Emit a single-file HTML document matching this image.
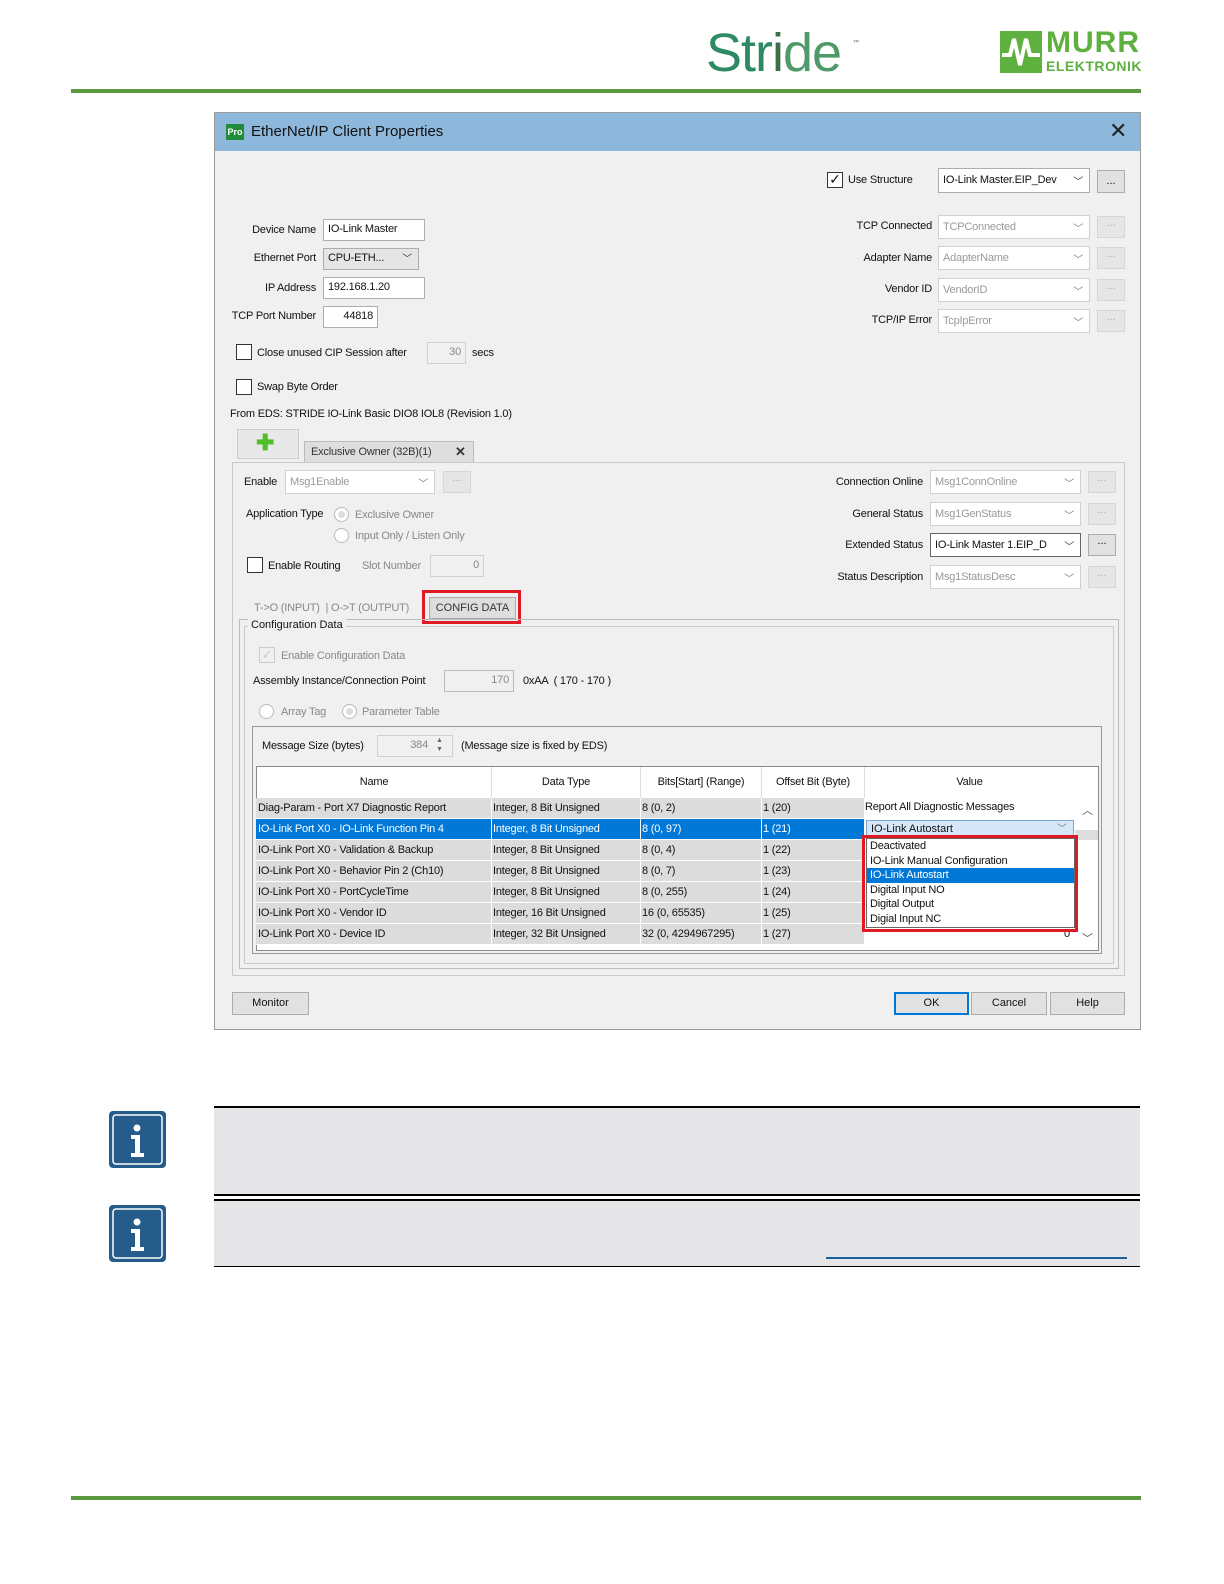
<!DOCTYPE html>
<html><head><meta charset="utf-8"><style>
*{margin:0;padding:0;box-sizing:border-box}
body{width:1224px;height:1584px;background:#fff;position:relative;font-family:"Liberation Sans",sans-serif;font-size:11px;color:#111;overflow:hidden}
.a{position:absolute;white-space:nowrap}
.inp{position:absolute;background:#fff;border:1px solid #adadad;padding:2px 4px;font-size:11px;line-height:15px;letter-spacing:-0.2px}
.dis{color:#999;border-color:#d0d0d0}
.btn{position:absolute;background:#e1e1e1;border:1px solid #adadad;text-align:center;font-size:11px}
.bd{background:#e6e6e6;border-color:#d6d6d6;color:#aaa}
.chk{position:absolute;width:16px;height:16px;border:1px solid #333;background:#fff}
.rad{position:absolute;width:15px;height:15px;border:1px solid #bbb;border-radius:50%;background:#fff}
.lbl{position:absolute;white-space:nowrap;font-size:11px;text-align:right;letter-spacing:-0.2px}
.cv{position:absolute;right:6px;top:2px;color:#777;font-size:10px}
.row{position:absolute;left:256px;width:608px;height:21px;background:#dcdcdc;border-bottom:1px solid #fff;font-size:11px;line-height:20px;letter-spacing:-0.2px}
.row span{position:absolute;top:0}
.dd div{height:14.5px;line-height:14px;padding-left:3px;font-size:11px;letter-spacing:-0.2px}
</style></head><body>

<!-- header -->
<div class="a" style="left:706px;top:22px;font-size:54px;color:#2e8a62;letter-spacing:-1px;font-family:'Liberation Sans',sans-serif">Str<span style="color:#3f6f4a">i</span><span style="color:#4f9a68">de</span></div>
<div class="a" style="left:853px;top:40px;font-size:6px;color:#555">™</div>
<svg class="a" style="left:1000px;top:31px" width="42" height="42" viewBox="0 0 42 42"><rect width="42" height="42" fill="#5fb13f"/><path d="M2 24 L10 24 L14 8 L20 34 L26 8 L30 24 L40 24" stroke="#fff" stroke-width="4" fill="none"/></svg>
<div class="a" style="left:1046px;top:26px;font-size:30px;font-weight:bold;color:#5fb13f;letter-spacing:1px">MURR</div>
<div class="a" style="left:1046px;top:58px;font-size:14px;font-weight:bold;color:#5fb13f;letter-spacing:0.5px">ELEKTRONIK</div>
<div class="a" style="left:71px;top:89px;width:1070px;height:4px;background:#5a9a3e"></div>

<!-- dialog -->
<div class="a" style="left:214px;top:112px;width:927px;height:918px;background:#f0f0f0;border:1px solid #9a9a9a"></div>
<div class="a" style="left:215px;top:113px;width:925px;height:38px;background:#8db8dc"></div>
<div class="a" style="left:226px;top:124px;width:18px;height:16px;background:#1e8c3a;color:#fff;font-size:9px;font-weight:bold;line-height:16px;text-align:center">Pro</div>
<div class="a" style="left:251px;top:123px;font-size:15px;color:#111">EtherNet/IP Client Properties</div>
<div class="a" style="left:1109px;top:118px;font-size:22px;color:#222">✕</div>

<!-- top left -->
<div class="lbl" style="left:230px;width:86px;top:224px">Device Name</div>
<div class="inp" style="left:323px;top:219px;width:102px;height:22px">IO-Link Master</div>
<div class="lbl" style="left:230px;width:86px;top:252px">Ethernet Port</div>
<div class="inp" style="left:323px;top:248px;width:96px;height:22px;background:#e5e5e5">CPU-ETH...<span class="cv" style="top:3px;color:#333">﹀</span></div>
<div class="lbl" style="left:230px;width:86px;top:282px">IP Address</div>
<div class="inp" style="left:323px;top:277px;width:102px;height:22px">192.168.1.20</div>
<div class="lbl" style="left:228px;width:88px;top:310px">TCP Port Number</div>
<div class="inp" style="left:323px;top:306px;width:55px;height:22px;text-align:right">44818</div>
<div class="chk" style="left:236px;top:344px"></div>
<div class="lbl" style="left:257px;top:347px">Close unused CIP Session after</div>
<div class="inp dis" style="left:427px;top:342px;width:39px;height:22px;text-align:right;background:#f0f0f0;color:#888">30</div>
<div class="lbl" style="left:472px;top:347px">secs</div>
<div class="chk" style="left:236px;top:379px"></div>
<div class="lbl" style="left:257px;top:381px">Swap Byte Order</div>
<div class="lbl" style="left:230px;top:408px">From EDS: STRIDE IO-Link Basic DIO8 IOL8 (Revision 1.0)</div>

<!-- top right -->
<div class="chk" style="left:827px;top:172px;font-size:14px;line-height:13px;text-align:center">✓</div>
<div class="lbl" style="left:848px;top:174px">Use Structure</div>
<div class="inp" style="left:938px;top:168px;width:152px;height:25px;line-height:18px">IO-Link Master.EIP_Dev<span class="cv" style="top:5px;color:#333">﹀</span></div>
<div class="btn" style="left:1097px;top:170px;width:28px;height:23px;line-height:20px">...</div>
<div class="lbl" style="left:820px;width:112px;top:220px">TCP Connected</div>
<div class="inp dis" style="left:938px;top:215px;width:152px;height:24px;line-height:18px">TCPConnected<span class="cv" style="top:5px">﹀</span></div>
<div class="btn bd" style="left:1097px;top:216px;width:28px;height:22px">...</div>
<div class="lbl" style="left:820px;width:112px;top:252px">Adapter Name</div>
<div class="inp dis" style="left:938px;top:246px;width:152px;height:24px;line-height:18px">AdapterName<span class="cv" style="top:5px">﹀</span></div>
<div class="btn bd" style="left:1097px;top:247px;width:28px;height:22px">...</div>
<div class="lbl" style="left:820px;width:112px;top:283px">Vendor ID</div>
<div class="inp dis" style="left:938px;top:278px;width:152px;height:24px;line-height:18px">VendorID<span class="cv" style="top:5px">﹀</span></div>
<div class="btn bd" style="left:1097px;top:279px;width:28px;height:22px">...</div>
<div class="lbl" style="left:820px;width:112px;top:314px">TCP/IP Error</div>
<div class="inp dis" style="left:938px;top:309px;width:152px;height:24px;line-height:18px">TcpIpError<span class="cv" style="top:5px">﹀</span></div>
<div class="btn bd" style="left:1097px;top:310px;width:28px;height:22px">...</div>

<!-- connection tabs -->
<div class="btn" style="left:237px;top:429px;width:62px;height:30px;background:#e8e8e8;border-color:#ccc"></div>
<div class="a" style="left:256px;top:433px;font-size:22px;font-weight:bold;color:#4fc02a;line-height:20px">✚</div>
<div class="a" style="left:304px;top:441px;width:170px;height:21px;background:#dedede;border:1px solid #bbb;border-bottom:none;font-size:11px;line-height:20px;padding-left:6px;color:#333;letter-spacing:-0.2px">Exclusive Owner (32B)(1)<span style="position:absolute;left:150px;font-weight:bold;font-size:13px">✕</span></div>
<div class="a" style="left:232px;top:462px;width:893px;height:514px;border:1px solid #c8c8c8"></div>

<div class="lbl" style="left:244px;top:476px">Enable</div>
<div class="inp dis" style="left:285px;top:470px;width:150px;height:24px;line-height:18px">Msg1Enable<span class="cv" style="top:5px">﹀</span></div>
<div class="btn bd" style="left:443px;top:471px;width:28px;height:22px">...</div>
<div class="lbl" style="left:246px;top:508px">Application Type</div>
<div class="rad" style="left:334px;top:507px;background:#ddd;box-shadow:inset 0 0 0 3px #fff"></div>
<div class="lbl" style="left:355px;top:509px;color:#888">Exclusive Owner</div>
<div class="rad" style="left:334px;top:528px"></div>
<div class="lbl" style="left:355px;top:530px;color:#888">Input Only / Listen Only</div>
<div class="chk" style="left:247px;top:557px"></div>
<div class="lbl" style="left:268px;top:560px">Enable Routing</div>
<div class="lbl" style="left:362px;top:560px;color:#888">Slot Number</div>
<div class="inp dis" style="left:430px;top:555px;width:54px;height:22px;text-align:right;background:#f0f0f0;color:#888">0</div>

<div class="lbl" style="left:810px;width:113px;top:476px">Connection Online</div>
<div class="inp dis" style="left:930px;top:470px;width:151px;height:24px;line-height:18px">Msg1ConnOnline<span class="cv" style="top:5px">﹀</span></div>
<div class="btn bd" style="left:1088px;top:471px;width:28px;height:22px">...</div>
<div class="lbl" style="left:810px;width:113px;top:508px">General Status</div>
<div class="inp dis" style="left:930px;top:502px;width:151px;height:24px;line-height:18px">Msg1GenStatus<span class="cv" style="top:5px">﹀</span></div>
<div class="btn bd" style="left:1088px;top:503px;width:28px;height:22px">...</div>
<div class="lbl" style="left:810px;width:113px;top:539px">Extended Status</div>
<div class="inp" style="left:930px;top:533px;width:151px;height:24px;line-height:18px;border-color:#666">IO-Link Master 1.EIP_D<span class="cv" style="top:5px;color:#333">﹀</span></div>
<div class="btn" style="left:1088px;top:534px;width:28px;height:22px">...</div>
<div class="lbl" style="left:810px;width:113px;top:571px">Status Description</div>
<div class="inp dis" style="left:930px;top:565px;width:151px;height:24px;line-height:18px">Msg1StatusDesc<span class="cv" style="top:5px">﹀</span></div>
<div class="btn bd" style="left:1088px;top:566px;width:28px;height:22px">...</div>

<!-- sub tabs -->
<div class="lbl" style="left:254px;top:602px;color:#888">T-&gt;O (INPUT) &nbsp;| O-&gt;T (OUTPUT)</div>
<div class="a" style="left:429px;top:597px;width:87px;height:22px;background:#dedede;border:1px solid #aaa;font-size:11px;line-height:20px;text-align:center;color:#333">CONFIG DATA</div>
<div class="a" style="left:422px;top:590px;width:99px;height:34px;border:3px solid #e01a22"></div>
<div class="a" style="left:239px;top:619px;width:880px;height:350px;border:1px solid #bbb"></div>
<div class="a" style="left:244px;top:626px;width:870px;height:338px;border:1px solid #ccc"></div>
<div class="a" style="left:248px;top:619px;background:#f0f0f0;padding:0 3px;font-size:11px">Configuration Data</div>

<div class="chk" style="left:259px;top:647px;border-color:#ccc;color:#ccc;font-size:13px;line-height:13px;text-align:center;background:#f0f0f0">✓</div>
<div class="lbl" style="left:281px;top:650px;color:#888">Enable Configuration Data</div>
<div class="lbl" style="left:253px;top:675px">Assembly Instance/Connection Point</div>
<div class="inp dis" style="left:444px;top:670px;width:70px;height:22px;text-align:right;background:#f0f0f0;color:#888;border-color:#bbb">170</div>
<div class="lbl" style="left:523px;top:675px">0xAA &nbsp;( 170 - 170 )</div>
<div class="rad" style="left:259px;top:704px"></div>
<div class="lbl" style="left:281px;top:706px;color:#888">Array Tag</div>
<div class="rad" style="left:342px;top:704px;background:#ddd;box-shadow:inset 0 0 0 3px #fff"></div>
<div class="lbl" style="left:362px;top:706px;color:#888">Parameter Table</div>

<div class="a" style="left:252px;top:726px;width:850px;height:228px;border:1px solid #999"></div>
<div class="lbl" style="left:262px;top:740px">Message Size (bytes)</div>
<div class="inp dis" style="left:377px;top:735px;width:76px;height:22px;text-align:right;padding-right:24px;background:#f0f0f0;color:#888">384</div>
<div class="a" style="left:436px;top:736px;font-size:7px;color:#666;line-height:9px">▲<br>▼</div>
<div class="lbl" style="left:461px;top:740px">(Message size is fixed by EDS)</div>

<!-- table -->
<div class="a" style="left:256px;top:766px;width:843px;height:185px;border:1px solid #888;background:#fff"></div>
<div class="a" style="left:257px;top:767px;width:817px;height:31px;background:#fff;font-size:11px;line-height:31px;letter-spacing:-0.2px">
<span class="a" style="left:0;width:234px;text-align:center">Name</span>
<span class="a" style="left:234px;width:149px;text-align:center;border-left:1px solid #ddd">Data Type</span>
<span class="a" style="left:383px;width:121px;text-align:center;border-left:1px solid #ddd">Bits[Start] (Range)</span>
<span class="a" style="left:504px;width:103px;text-align:center;border-left:1px solid #ddd">Offset Bit (Byte)</span>
<span class="a" style="left:607px;width:210px;text-align:center;border-left:1px solid #ddd">Value</span>
</div>
<div class="row" style="top:798px"><span style="left:2px">Diag-Param - Port X7 Diagnostic Report</span><span style="left:237px">Integer, 8 Bit Unsigned</span><span style="left:386px">8 (0, 2)</span><span style="left:507px">1 (20)</span></div>
<div class="row" style="top:819px;background:#0078d7;color:#fff"><span style="left:2px">IO-Link Port X0 - IO-Link Function Pin 4</span><span style="left:237px">Integer, 8 Bit Unsigned</span><span style="left:386px">8 (0, 97)</span><span style="left:507px">1 (21)</span></div>
<div class="row" style="top:840px"><span style="left:2px">IO-Link Port X0 - Validation &amp; Backup</span><span style="left:237px">Integer, 8 Bit Unsigned</span><span style="left:386px">8 (0, 4)</span><span style="left:507px">1 (22)</span></div>
<div class="row" style="top:861px"><span style="left:2px">IO-Link Port X0 - Behavior Pin 2 (Ch10)</span><span style="left:237px">Integer, 8 Bit Unsigned</span><span style="left:386px">8 (0, 7)</span><span style="left:507px">1 (23)</span></div>
<div class="row" style="top:882px"><span style="left:2px">IO-Link Port X0 - PortCycleTime</span><span style="left:237px">Integer, 8 Bit Unsigned</span><span style="left:386px">8 (0, 255)</span><span style="left:507px">1 (24)</span></div>
<div class="row" style="top:903px"><span style="left:2px">IO-Link Port X0 - Vendor ID</span><span style="left:237px">Integer, 16 Bit Unsigned</span><span style="left:386px">16 (0, 65535)</span><span style="left:507px">1 (25)</span></div>
<div class="row" style="top:924px"><span style="left:2px">IO-Link Port X0 - Device ID</span><span style="left:237px">Integer, 32 Bit Unsigned</span><span style="left:386px">32 (0, 4294967295)</span><span style="left:507px">1 (27)</span></div>
<div class="a" style="left:491px;top:798px;width:1px;height:148px;background:#fff"></div>
<div class="a" style="left:640px;top:798px;width:1px;height:148px;background:#fff"></div>
<div class="a" style="left:761px;top:798px;width:1px;height:148px;background:#fff"></div>
<div class="a" style="left:865px;top:801px;font-size:11px;letter-spacing:-0.2px">Report All Diagnostic Messages</div>
<div class="a" style="left:866px;top:820px;width:208px;height:18px;background:#d6e8f8;border:1px solid #7aa7d6;font-size:11px;line-height:16px;padding-left:4px">IO-Link Autostart<span class="cv" style="top:1px">﹀</span></div>
<div class="a" style="left:1064px;top:928px;font-size:11px">0</div>
<div class="a" style="left:1082px;top:802px;font-size:11px;color:#555">︿</div>
<div class="a" style="left:1082px;top:930px;font-size:11px;color:#555">﹀</div>
<div class="a" style="left:1075px;top:830px;width:23px;height:10px;background:#ddd"></div>
<div class="a dd" style="left:866px;top:838px;width:209px;height:90px;background:#fff;border:1px solid #666">
<div>Deactivated</div><div>IO-Link Manual Configuration</div><div style="background:#0078d7;color:#fff">IO-Link Autostart</div><div>Digital Input NO</div><div>Digital Output</div><div>Digial Input NC</div></div>
<div class="a" style="left:862px;top:835px;width:216px;height:97px;border:3px solid #e01a22"></div>

<!-- bottom buttons -->
<div class="btn" style="left:232px;top:992px;width:77px;height:23px;line-height:21px">Monitor</div>
<div class="btn" style="left:894px;top:992px;width:75px;height:23px;line-height:19px;border:2px solid #0078d7">OK</div>
<div class="btn" style="left:971px;top:992px;width:76px;height:23px;line-height:21px">Cancel</div>
<div class="btn" style="left:1050px;top:992px;width:75px;height:23px;line-height:21px">Help</div>

<!-- info boxes -->
<svg class="a" style="left:109px;top:1111px" width="57" height="57" viewBox="0 0 57 57"><rect width="57" height="57" rx="4" fill="#255c8a"/><rect x="4" y="4" width="49" height="49" rx="3" fill="none" stroke="#fff" stroke-width="1.5"/><circle cx="28" cy="17" r="3.5" fill="#fff"/><path d="M22 24h9v18h4v4H22v-4h4V28h-4z" fill="#fff"/></svg>
<svg class="a" style="left:109px;top:1205px" width="57" height="57" viewBox="0 0 57 57"><rect width="57" height="57" rx="4" fill="#255c8a"/><rect x="4" y="4" width="49" height="49" rx="3" fill="none" stroke="#fff" stroke-width="1.5"/><circle cx="28" cy="17" r="3.5" fill="#fff"/><path d="M22 24h9v18h4v4H22v-4h4V28h-4z" fill="#fff"/></svg>
<div class="a" style="left:214px;top:1106px;width:926px;height:2px;background:#000"></div>
<div class="a" style="left:214px;top:1108px;width:926px;height:86px;background:#e6e6e8"></div>
<div class="a" style="left:214px;top:1194px;width:926px;height:2px;background:#000"></div>
<div class="a" style="left:214px;top:1199px;width:926px;height:2px;background:#000"></div>
<div class="a" style="left:214px;top:1201px;width:926px;height:65px;background:#e6e6e8"></div>
<div class="a" style="left:826px;top:1257px;width:301px;height:2px;background:#1a5e9a"></div>
<div class="a" style="left:214px;top:1266px;width:926px;height:1px;background:#000"></div>

<div class="a" style="left:71px;top:1496px;width:1070px;height:4px;background:#5a9a3e"></div>
</body></html>
